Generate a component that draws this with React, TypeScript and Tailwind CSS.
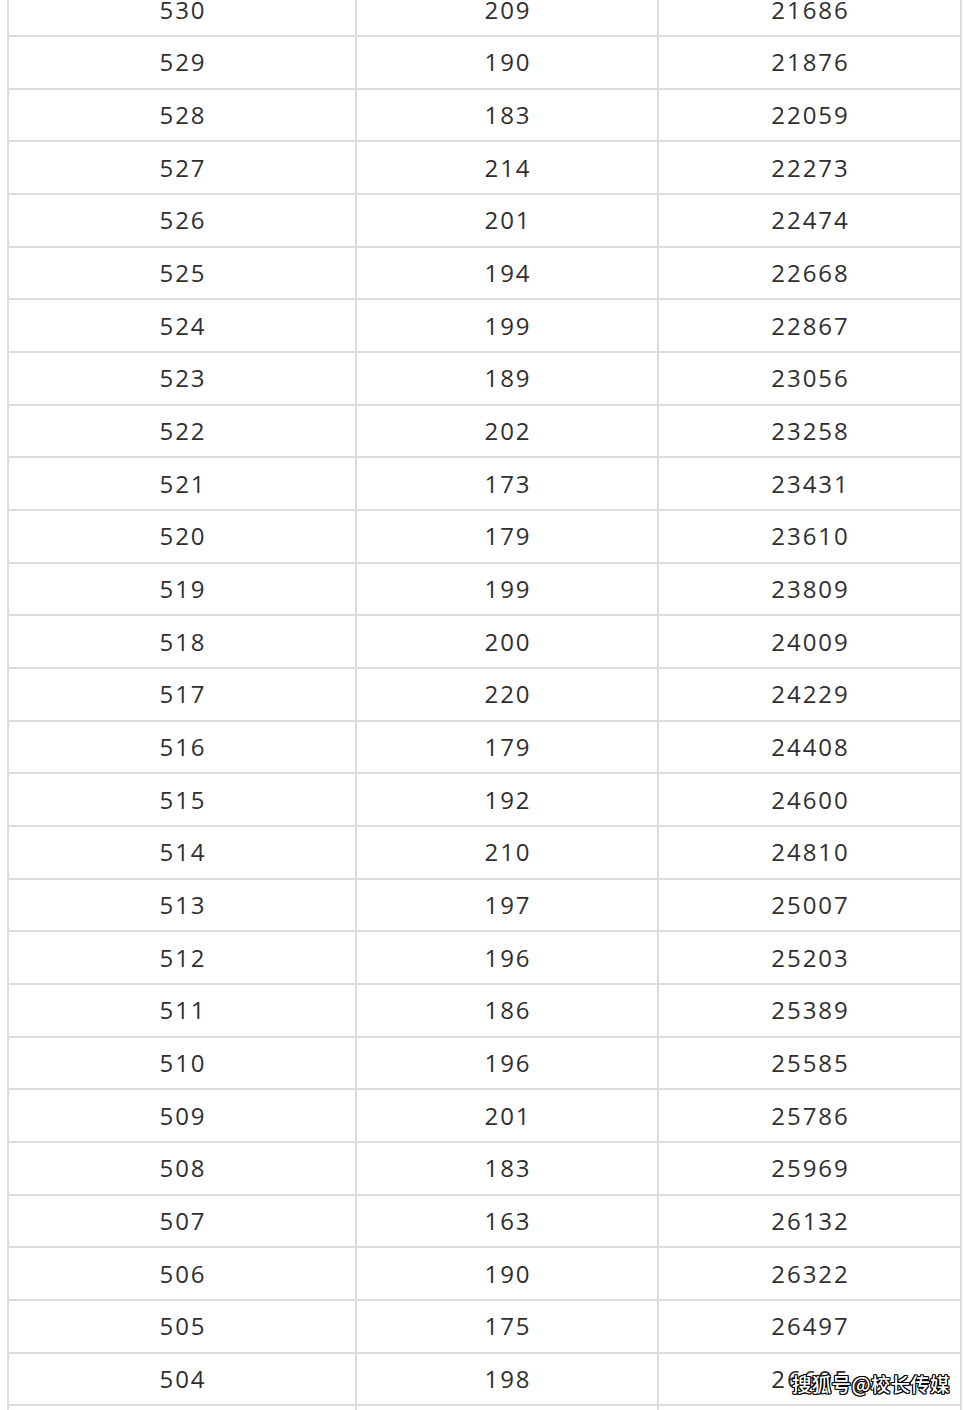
import React from "react";

const rows: [string, string, string][] = [
  ["530", "209", "21686"],
  ["529", "190", "21876"],
  ["528", "183", "22059"],
  ["527", "214", "22273"],
  ["526", "201", "22474"],
  ["525", "194", "22668"],
  ["524", "199", "22867"],
  ["523", "189", "23056"],
  ["522", "202", "23258"],
  ["521", "173", "23431"],
  ["520", "179", "23610"],
  ["519", "199", "23809"],
  ["518", "200", "24009"],
  ["517", "220", "24229"],
  ["516", "179", "24408"],
  ["515", "192", "24600"],
  ["514", "210", "24810"],
  ["513", "197", "25007"],
  ["512", "196", "25203"],
  ["511", "186", "25389"],
  ["510", "196", "25585"],
  ["509", "201", "25786"],
  ["508", "183", "25969"],
  ["507", "163", "26132"],
  ["506", "190", "26322"],
  ["505", "175", "26497"],
  ["504", "198", "26695"],
  ["", "", ""],
];

export default function App() {
  return (
    <div className="relative h-[1410px] w-[969px] overflow-hidden bg-white">
      <div
        className="ml-[7px] -mt-[15.68px] w-[955px] border-x-2 border-[#dcdcdc] text-[24px] tracking-[2px] text-[#2f2f2f]"
        style={{ fontFamily: '"Open Sans", "Noto Sans", sans-serif' }}
      >
        {rows.map((r, i) => (
          <div key={i} className="flex h-[52.68px] border-b-2 border-[#dcdcdc]">
            <div className="flex w-[348px] items-center justify-center border-r-2 border-[#dcdcdc] pl-[2px]">
              {r[0]}
            </div>
            <div className="flex w-[302px] items-center justify-center border-r-2 border-[#dcdcdc] pl-[2px]">
              {r[1]}
            </div>
            <div className="flex w-[301px] items-center justify-center pl-[2px]">
              {r[2]}
            </div>
          </div>
        ))}
      </div>
      <div
        className="absolute left-[792px] top-[1370px] text-[19.5px] font-medium leading-[28px] tracking-[0.3px] text-white"
        style={{
          fontFamily: '"Noto Sans CJK SC", "Noto Sans", sans-serif',
          textShadow:
            "1px 0 0 #000, -1px 0 0 #000, 0 1px 0 #000, 0 -1px 0 #000, 1px 1px 0 #000, -1px -1px 0 #000, 1px -1px 0 #000, -1px 1px 0 #000",
        }}
      >
        搜狐号@校长传媒
      </div>
    </div>
  );
}
